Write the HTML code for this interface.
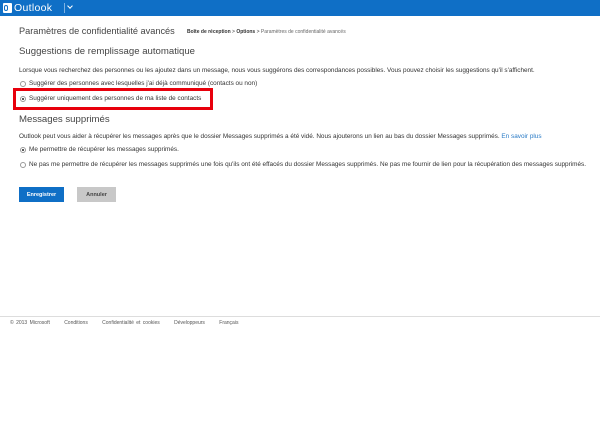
<!DOCTYPE html>
<html><head><meta charset="utf-8"><style>
*{margin:0;padding:0;box-sizing:border-box}
body{width:600px;height:421px;background:#fff;font-family:"Liberation Sans",sans-serif;color:#333;position:relative;overflow:hidden}
.a{position:absolute;white-space:nowrap}
.hdr{position:absolute;left:0;top:0;width:600px;height:16px;background:#0f6fc6}
.s{font-size:6.4px;color:#333}
.r{position:absolute;width:6px;height:6px;border:1px solid #999;border-radius:50%;background:#fff}
.r.on::after{content:"";position:absolute;left:1px;top:1px;width:2px;height:2px;border-radius:50%;background:#222}
.b{position:absolute;display:flex;align-items:center;justify-content:center;font-size:5.5px;font-weight:bold}
</style></head><body>
<div class="hdr"></div>
<div class="a" style="left:3px;top:3px;width:9px;height:10px;background:#fff;border-radius:1px"></div>
<div class="a" style="left:4px;top:5px;width:4px;height:6px;border:1px solid #0f6fc6;border-radius:2px"></div>
<div class="a" style="left:14px;top:2px;font-size:10.5px;color:#fff;letter-spacing:0.3px">Outlook</div>
<div class="a" style="left:64px;top:3px;width:1px;height:10px;background:#7fb2e2"></div>
<div class="a" style="left:68px;top:4px;width:4px;height:4px;border-right:1.2px solid #fff;border-bottom:1.2px solid #fff;transform:rotate(45deg)"></div>

<div class="a" style="left:19px;top:26px;font-size:9.2px;color:#444">Paramètres de confidentialité avancés</div>
<div class="a" style="left:187px;top:29px;font-size:5px;color:#333"><b>Boîte de réception</b> &gt; <b>Options</b> &gt; <span style="color:#666">Paramètres de confidentialité avancés</span></div>

<div class="a" style="left:19px;top:46px;font-size:9.6px;color:#444">Suggestions de remplissage automatique</div>
<div class="a s" style="left:19px;top:67px">Lorsque vous recherchez des personnes ou les ajoutez dans un message, nous vous suggérons des correspondances possibles. Vous pouvez choisir les suggestions qu'il s'affichent.</div>
<div class="r" style="left:20px;top:81px"></div>
<div class="a s" style="left:29px;top:80px">Suggérer des personnes avec lesquelles j'ai déjà communiqué (contacts ou non)</div>
<div class="a" style="left:13px;top:88px;width:200px;height:22px;border:3px solid #e8000c"></div>
<div class="r on" style="left:20px;top:96px"></div>
<div class="a s" style="left:29px;top:95px">Suggérer uniquement des personnes de ma liste de contacts</div>

<div class="a" style="left:19px;top:114px;font-size:9.6px;color:#444">Messages supprimés</div>
<div class="a s" style="left:19px;top:133px">Outlook peut vous aider à récupérer les messages après que le dossier Messages supprimés a été vidé. Nous ajouterons un lien au bas du dossier Messages supprimés. <span style="color:#2a7bc6">En savoir plus</span></div>
<div class="r on" style="left:20px;top:147px"></div>
<div class="a s" style="left:29px;top:146px">Me permettre de récupérer les messages supprimés.</div>
<div class="r" style="left:20px;top:162px"></div>
<div class="a s" style="left:29px;top:161px">Ne pas me permettre de récupérer les messages supprimés une fois qu'ils ont été effacés du dossier Messages supprimés. Ne pas me fournir de lien pour la récupération des messages supprimés.</div>

<div class="b" style="left:19px;top:187px;width:45px;height:15px;background:#0f6fc6;color:#fff">Enregistrer</div>
<div class="b" style="left:77px;top:187px;width:39px;height:15px;background:#c8c8c8;color:#444">Annuler</div>

<div class="a" style="left:0;top:316px;width:600px;height:1px;background:#ddd"></div>
<div class="a" style="left:10px;top:320px;font-size:5px;color:#555;word-spacing:1px">© 2013 Microsoft&nbsp;&nbsp;&nbsp;&nbsp;&nbsp; Conditions&nbsp;&nbsp;&nbsp;&nbsp;&nbsp; Confidentialité et cookies&nbsp;&nbsp;&nbsp;&nbsp;&nbsp; Développeurs&nbsp;&nbsp;&nbsp;&nbsp;&nbsp; Français</div>
</body></html>
